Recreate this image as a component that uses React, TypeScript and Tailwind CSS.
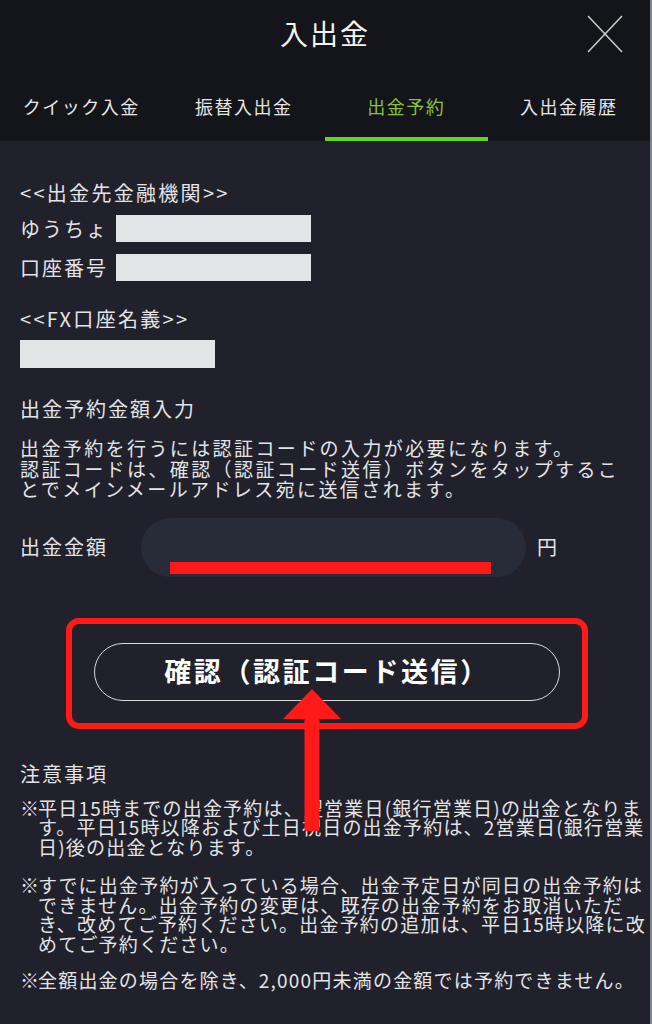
import React from "react";

const jp = { fontFamily: '"Noto Sans CJK JP", "Noto Sans", sans-serif' };

const tabs = ["クイック入金", "振替入出金", "出金予約", "入出金履歴"];

const CloseIcon = () => (
  <svg width="36" height="38" viewBox="0 0 36 38" fill="none">
    <line x1="1" y1="1" x2="35" y2="37" stroke="#c9c9cc" strokeWidth="1.6" />
    <line x1="35" y1="1" x2="1" y2="37" stroke="#c9c9cc" strokeWidth="1.6" />
  </svg>
);

const Note = ({ lines }: { lines: string[] }) => (
  <div className="flex text-[19px] leading-[19.5px] tracking-[1.2px] whitespace-nowrap">
    <span className="w-[18px] shrink-0">※</span>
    <span>
      {lines.map((l, i) => (
        <React.Fragment key={i}>
          {l}
          {i < lines.length - 1 && <br />}
        </React.Fragment>
      ))}
    </span>
  </div>
);

const App = () => {
  return (
    <div style={jp} className="relative w-[652px] h-[1024px] overflow-hidden bg-[#20212b] text-[#e4e4e6] border-r-2 border-[#80868f]">
      {/* header */}
      <header className="bg-[#14151a]">
        <div className="relative h-[66px] flex items-center justify-center">
          <h1 className="text-[28px] tracking-[2px] text-[#f2f2f2]">入出金</h1>
          <button className="absolute right-[27px] top-[15px]">
            <CloseIcon />
          </button>
        </div>
        <nav className="grid grid-cols-4 h-[75px]">
          {tabs.map((t, i) => (
            <div key={t} className="relative flex items-center justify-center pt-[6px]">
              <span
                className={
                  i === 2
                    ? "text-[18px] tracking-[1.5px] text-[#8cc23c]"
                    : "text-[18px] tracking-[1.5px] text-[#e6e6e6]"
                }
              >
                {t}
              </span>
              {i === 2 && <div className="absolute left-0 right-0 bottom-0 h-[4px] bg-[#66d41c]" />}
            </div>
          ))}
        </nav>
      </header>

      {/* content */}
      <main className="px-[20px] pt-[38px]">
        <p className="text-[20px] leading-[28px] tracking-[2.3px]">&lt;&lt;出金先金融機関&gt;&gt;</p>
        <div className="mt-[8px] flex items-center h-[27px]">
          <span className="w-[96px] text-[20px] tracking-[2px]">ゆうちょ</span>
          <div className="w-[195px] h-[27px] bg-[#e3e4e8]" />
        </div>
        <div className="mt-[12px] flex items-center h-[27px]">
          <span className="w-[96px] text-[20px] tracking-[2px]">口座番号</span>
          <div className="w-[195px] h-[27px] bg-[#e3e4e8]" />
        </div>

        <p className="mt-[24px] text-[20px] leading-[28px] tracking-[2.3px]">&lt;&lt;FX口座名義&gt;&gt;</p>
        <div className="mt-[7px] w-[195px] h-[28px] bg-[#e3e4e8]" />

        <p className="mt-[27px] text-[20px] leading-[28px] tracking-[2px]">出金予約金額入力</p>
        <p className="mt-[15px] text-[19px] leading-[20.5px] tracking-[2.4px] whitespace-nowrap">
          出金予約を行うには認証コードの入力が必要になります。
          <br />
          認証コードは、確認（認証コード送信）ボタンをタップするこ
          <br />
          とでメインメールアドレス宛に送信されます。
        </p>

        <div className="mt-[18px] flex items-center">
          <span className="w-[121px] text-[20px] tracking-[2px]">出金金額</span>
          <div className="relative w-[385px] h-[59px] rounded-full bg-[#282b38]">
            <div className="absolute left-[29px] top-[44px] w-[321px] h-[12px] bg-[#ff1a1a]" />
          </div>
          <span className="ml-[11px] text-[20px]">円</span>
        </div>

        <div className="mt-[41px] ml-[46px] w-[522px] h-[111px] border-[6px] border-[#ff1a1a] rounded-[13px] px-[22px] pt-[19px]">
          <button className="w-full h-[58px] rounded-full border-[1.5px] border-[#d9d9dc] flex items-center justify-center text-[27px] font-bold tracking-[2.6px] text-white">
            確認（認証コード送信）
          </button>
        </div>

        <p className="mt-[31px] text-[20px] leading-[28px] tracking-[2px]">注意事項</p>
        <div className="mt-[10px]">
          <Note
            lines={[
              "平日15時までの出金予約は、翌営業日(銀行営業日)の出金となりま",
              "す。平日15時以降および土日祝日の出金予約は、2営業日(銀行営業",
              "日)後の出金となります。",
            ]}
          />
        </div>
        <div className="mt-[19px]">
          <Note
            lines={[
              "すでに出金予約が入っている場合、出金予定日が同日の出金予約は",
              "できません。出金予約の変更は、既存の出金予約をお取消いただ",
              "き、改めてご予約ください。出金予約の追加は、平日15時以降に改",
              "めてご予約ください。",
            ]}
          />
        </div>
        <div className="mt-[17px]">
          <Note lines={["全額出金の場合を除き、2,000円未満の金額では予約できません。"]} />
        </div>
      </main>

      {/* annotation arrow */}
      <svg className="absolute left-[281px] top-[689px]" width="62" height="142" viewBox="0 0 62 142">
        <polygon points="31,0 60,30 2,30" fill="#ff1a1a" />
        <rect x="23.5" y="29" width="15" height="113" fill="#ff1a1a" />
      </svg>
    </div>
  );
};

export default App;
